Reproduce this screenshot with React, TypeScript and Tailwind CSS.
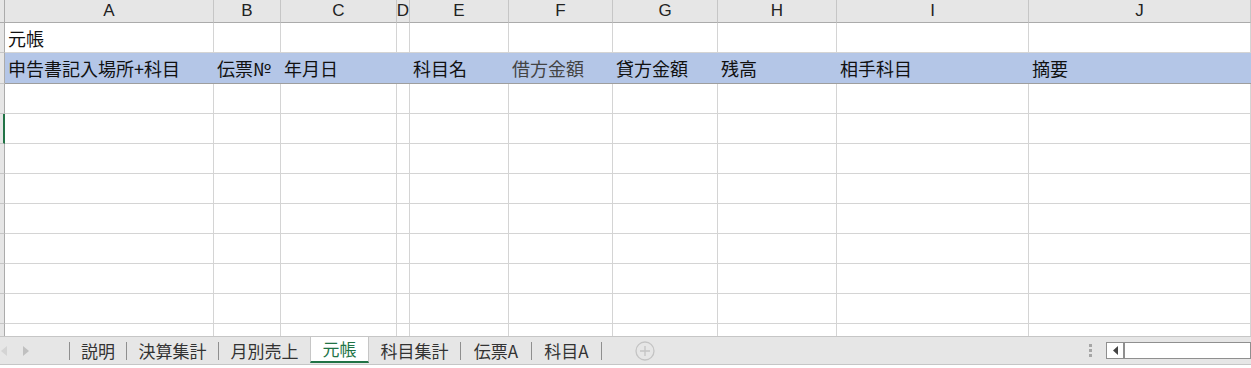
import { Fragment } from "react";

const cols = ["", "A", "B", "C", "D", "E", "F", "G", "H", "I", "J"];

const headerRow = [
  "申告書記入場所+科目",
  "伝票№",
  "年月日",
  "",
  "科目名",
  "借方金額",
  "貸方金額",
  "残高",
  "相手科目",
  "摘要",
];

const jp = "font-['Noto_Sans_CJK_JP','Noto_Sans_CJK_SC',sans-serif]";

const Sep = () => <span className="h-[18px] w-px bg-[#8f8f8f]" />;

const Tab = ({ label, w }: { label: string; w: string }) => (
  <div className={`${w} flex items-center justify-center text-[17px] text-[#333] ${jp}`}>
    {label}
  </div>
);

export default function App() {
  const emptyRows = Array.from({ length: 10 }, (_, i) => i);

  return (
    <div className="w-[1251px] h-[368px] overflow-hidden bg-white flex flex-col">
      {/* シート */}
      <div className="h-[336px] overflow-hidden">
        <div className="grid grid-cols-[5px_209px_67px_116px_13px_99px_104px_105px_119px_192px_1fr]">
          {/* 列見出し */}
          {cols.map((c, i) => (
            <div
              key={"h" + i}
              className={`h-[23px] bg-[#e6e6e6] border-b border-b-[#ababab] border-r ${
                i === 0 ? "border-r-[#ababab]" : "border-r-[#c6c6c6]"
              } flex items-center justify-center text-[17px] text-[#222] font-['Liberation_Sans_Narrow','Liberation_Sans',sans-serif]`}
            >
              {c}
            </div>
          ))}

          {/* 1行目 */}
          <div className="h-[30px] bg-[#e6e6e6] border-r border-r-[#ababab] border-b border-b-[#c6c6c6]" />
          {headerRow.map((_, i) => (
            <div
              key={"r1" + i}
              className={`h-[30px] border-r border-b border-[#d4d4d4] pl-[3px] pt-[2px] flex items-center whitespace-nowrap text-[18px] text-[#111] ${jp}`}
            >
              {i === 0 ? "元帳" : ""}
            </div>
          ))}

          {/* 2行目 見出し */}
          <div className="h-[31px] bg-[#e6e6e6] border-r border-r-[#ababab] border-b border-b-[#c6c6c6]" />
          {headerRow.map((t, i) => (
            <div
              key={"r2" + i}
              className={`h-[31px] bg-[#b4c6e7] border-b border-b-[#9e9e9e] pl-[3px] flex items-center whitespace-nowrap text-[18px] ${
                i === 5 ? "text-[#444]" : "text-[#111]"
              } ${jp}`}
            >
              {t}
            </div>
          ))}

          {/* 空行 */}
          {emptyRows.map((r) => (
            <Fragment key={"row" + r}>
              <div
                className={`h-[30px] bg-[#e6e6e6] border-b border-b-[#c6c6c6] ${
                  r === 1 ? "border-r-2 border-r-[#217346]" : "border-r border-r-[#ababab]"
                }`}
              />
              {headerRow.map((_, i) => (
                <div key={"c" + r + "-" + i} className="h-[30px] border-r border-b border-[#d4d4d4]" />
              ))}
            </Fragment>
          ))}
        </div>
      </div>

      {/* シートタブ */}
      <div className="h-[29px] bg-[#e6e6e6] border-t border-t-[#c6c6c6] border-b border-b-[#c6c6c6] flex items-stretch">
        <div className="w-[69px] flex items-center gap-[16px] pl-[1px]">
          <svg width="6" height="10" viewBox="0 0 6 10">
            <path d="M6 0v10L0 5z" fill="#d4d4d4" />
          </svg>
          <svg width="6" height="10" viewBox="0 0 6 10">
            <path d="M0 0v10l6-5z" fill="#c0c0c0" />
          </svg>
        </div>
        <div className="flex items-center">
          <Sep />
        </div>
        <div className="flex items-center">
          <Tab label="説明" w="w-[56px]" />
          <Sep />
          <Tab label="決算集計" w="w-[91px]" />
          <Sep />
          <Tab label="月別売上" w="w-[91px]" />
        </div>
        <div className="w-[59px] bg-white border-x border-[#c6c6c6] border-b-2 border-b-[#217346] flex items-center justify-center -mb-[3px] h-[26px]">
          <span className={`text-[17px] text-[#217346] ${jp}`}>元帳</span>
        </div>
        <div className="flex items-center">
          <Tab label="科目集計" w="w-[91px]" />
          <Sep />
          <Tab label="伝票A" w="w-[70px]" />
          <Sep />
          <Tab label="科目A" w="w-[69px]" />
          <Sep />
        </div>
        <div className="flex items-center pl-[33px]">
          <svg width="20" height="20" viewBox="0 0 20 20">
            <circle cx="10" cy="10" r="9" fill="none" stroke="#c4c4c4" strokeWidth="1.3" />
            <path d="M10 5v10M5 10h10" stroke="#c4c4c4" strokeWidth="1.3" />
          </svg>
        </div>
        <div className="flex-1" />
        <div className="flex flex-col justify-center gap-[2px] mr-[14px]">
          <span className="w-[3px] h-[3px] bg-[#a6a6a6]" />
          <span className="w-[3px] h-[3px] bg-[#a6a6a6]" />
          <span className="w-[3px] h-[3px] bg-[#a6a6a6]" />
        </div>
        <div className="w-[145px] my-[5px] bg-white border border-[#8f8f8f] flex">
          <div className="w-[18px] border-r-2 border-r-[#8f8f8f] flex items-center justify-center">
            <svg width="5" height="9" viewBox="0 0 5 9">
              <path d="M5 0v9L0 4.5z" fill="#444" />
            </svg>
          </div>
        </div>
      </div>
    </div>
  );
}
